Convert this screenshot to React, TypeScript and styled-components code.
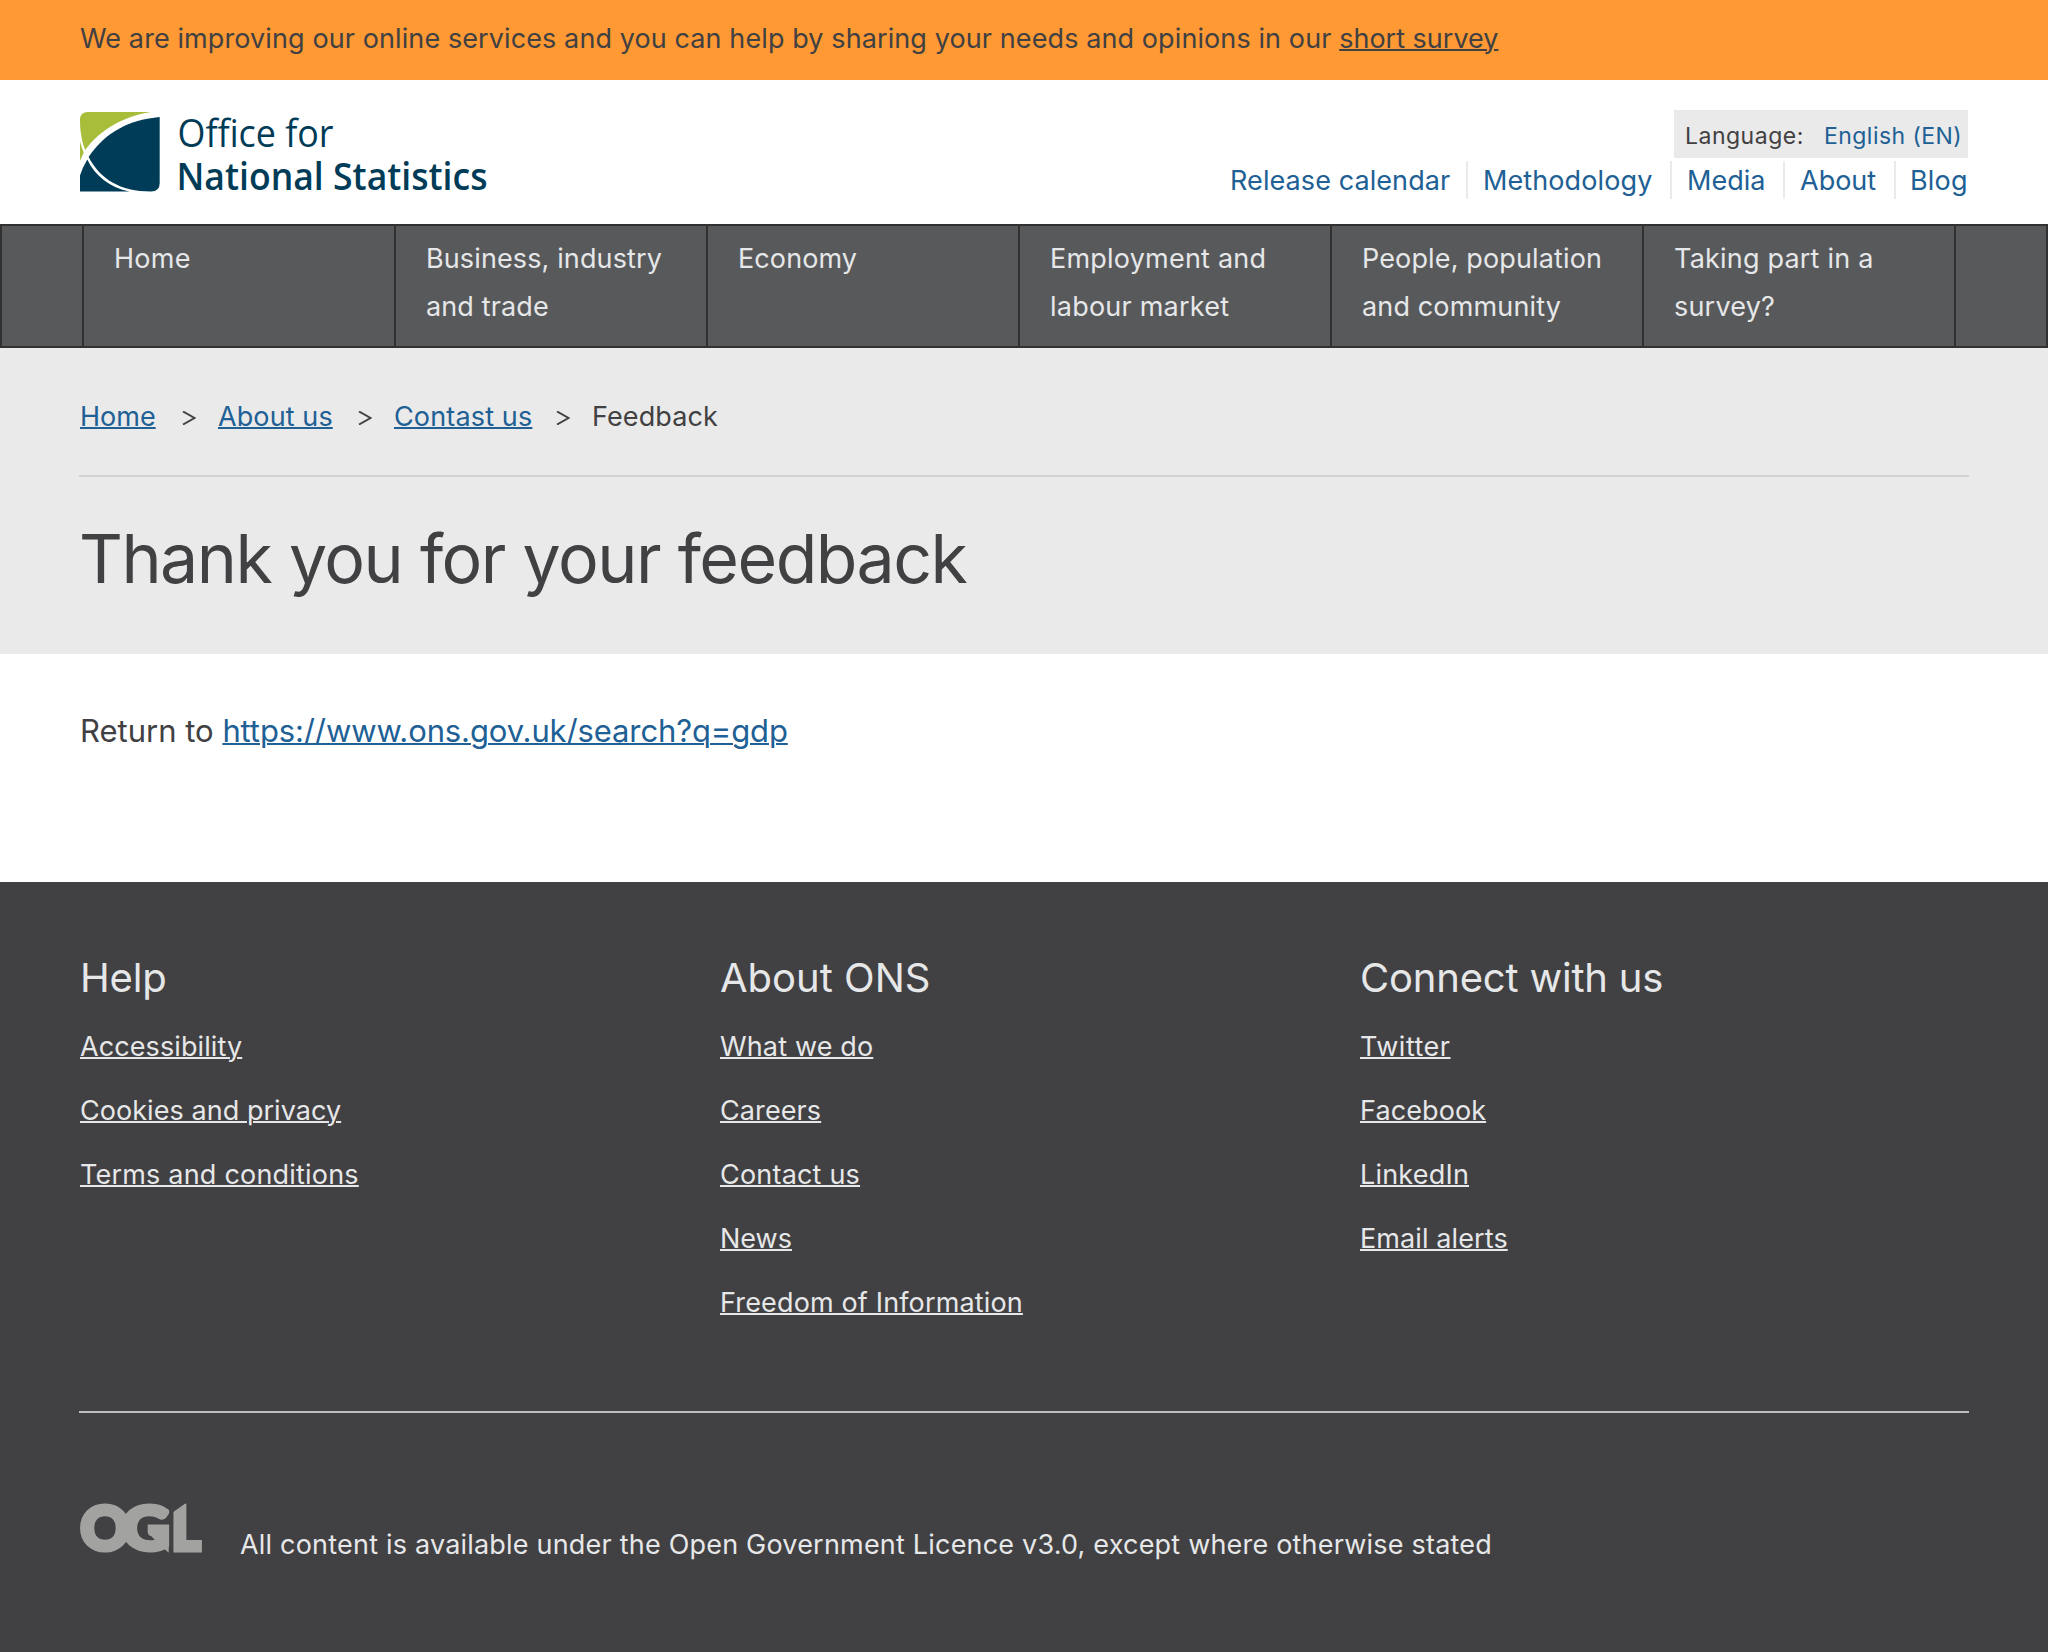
import React from "react";
import styled, { createGlobalStyle } from "styled-components";

const colour = {
  text: "#414042",
  link: "#206095",
  pale: "#e6e7e8",
  panel: "#eaeaea",
  navBorder: "#323132",
  nav: "#58595b",
};

const GlobalStyle = createGlobalStyle`
  * { box-sizing: border-box; }
  body {
    margin: 0;
    background: #fff;
    color: ${colour.text};
    font: 400 27px/48px Inter, "Liberation Sans", sans-serif;
    letter-spacing: 0.2px;
  }
  ul, ol { margin: 0; padding: 0; list-style: none; }
`;

const Page = styled.div`
  display: flex;
  flex-direction: column;
  min-height: 1652px;
`;

const Link = styled.a<{ $tone?: string; $track?: number; $plain?: boolean }>`
  color: ${(p) => p.$tone ?? colour.link};
  letter-spacing: ${(p) => p.$track ?? 0.2}px;
  text-decoration: ${(p) => (p.$plain ? "none" : "underline")};
  text-decoration-thickness: 2px;
  text-underline-offset: 1px;
  white-space: nowrap;
`;

const Banner = styled.div`
  height: 80px;
  padding: 15px 80px 0;
  background: #ff9933;
  letter-spacing: 0.1px;
`;

const Header = styled.header`
  display: flex;
  justify-content: space-between;
  height: 144px;
  padding: 30px 80px 0;
`;

const LogoLink = styled.a`
  display: block;
  height: 84px;
`;

const LogoDrawing = styled.svg`
  display: block;
  overflow: visible;
`;

const HeaderTools = styled.div`
  display: flex;
  flex-direction: column;
  align-items: flex-end;
`;

const Language = styled.div`
  display: flex;
  width: 294px;
  height: 48px;
  padding: 4px 0 0 11px;
  background: ${colour.panel};
  font-size: 23px;
  line-height: 44px;
`;

const LanguageLabel = styled.span`
  width: 139px;
  letter-spacing: 0.5px;
`;

const QuickLinks = styled.ul`
  display: flex;
  margin-top: 3px;
  line-height: 40px;
`;

const QuickItem = styled.li<{ $width: number }>`
  width: ${(p) => p.$width}px;
  height: 38px;
  padding-left: 15px;
  border-right: 2px solid ${colour.panel};
  &:first-child { padding-left: 1px; }
  &:last-child { padding-left: 14px; border-right: 0; }
`;

const Nav = styled.nav`
  height: 124px;
  padding-left: 80px;
  background: ${colour.nav};
  border: 2px solid ${colour.navBorder};
`;

const NavList = styled.ul`
  display: flex;
  height: 100%;
  width: 1874px;
  border-right: 2px solid ${colour.navBorder};
`;

const NavItem = styled.li<{ $track?: number }>`
  width: 312px;
  padding: 9px 24px 0 30px;
  border-left: 2px solid ${colour.navBorder};
  color: ${colour.pale};
  letter-spacing: ${(p) => p.$track ?? 0.2}px;
`;

const Hero = styled.section`
  height: 306px;
  padding: 45px 79px 0;
  background: ${colour.panel};
`;

const Crumbs = styled.ol`
  display: flex;
  height: 84px;
  padding-left: 1px;
  border-bottom: 2px solid #d0d2d3;
`;

const Crumb = styled.li<{ $width?: number; $track?: number }>`
  display: flex;
  width: ${(p) => (p.$width ? `${p.$width}px` : "auto")};
  letter-spacing: ${(p) => p.$track ?? 0.2}px;
  & + & { padding-left: 22px; }
`;

const Chevron = styled.svg`
  flex: none;
  margin: 18px 0 0 auto;
`;

const Title = styled.h1`
  margin: 33px 0 0;
  font-size: 68px;
  font-weight: 400;
  line-height: 96px;
  letter-spacing: -1.5px;
`;

const Main = styled.main`
  height: 228px;
  padding: 53px 80px 0;
  font-size: 31px;
  letter-spacing: 0;
`;

const Footer = styled.footer`
  flex: 1;
  padding: 72px 79px 0;
  background: ${colour.text};
  color: ${colour.pale};
`;

const FooterColumns = styled.div`
  display: grid;
  grid-template-columns: repeat(3, 640px);
  height: 459px;
  width: 1890px;
  padding-left: 1px;
  border-bottom: 2px solid #bcbec0;
`;

const FooterHeading = styled.h2<{ $track: number }>`
  margin: 0 0 21px;
  font-size: 40px;
  font-weight: 400;
  line-height: 48px;
  letter-spacing: ${(p) => p.$track}px;
`;

const FooterList = styled.ul`
  display: grid;
  row-gap: 16px;
`;

const Licence = styled.div`
  display: flex;
  gap: 39px;
  padding: 91px 0 0 1px;
`;

const LicenceText = styled.p`
  margin: 17px 0 0;
`;

function OnsLogo() {
  return (
    <LogoDrawing width="420" height="84" viewBox="0 0 420 84" role="img" aria-label="Office for National Statistics">
      <g transform="translate(0 2)">
        <path fill="#a8bd3a" d="M0 8Q0 0 8 0H71C40 5 18 20 5.300 38C2 30 0 20 0 8Z" />
        <path fill="#a8bd3a" d="M0 29.500Q1.500 35.500 3.800 40.400L0 48.700Z" />
        <path fill="#003c57" d="M79.700 5V71Q79.700 79.500 71 79.500C40 79.500 20 67 8.600 45C26 19 50 8 79.700 5Z" />
        <path fill="#003c57" d="M7.300 47.500C15 64 30 75.500 49.500 79.500H0V63.500Q2.500 55.500 7.300 47.500Z" />
      </g>
      <g fill="#003c57" fontFamily="'Open Sans', 'Noto Sans', sans-serif" fontSize="38.500" letterSpacing="0">
        <text x="97.500" y="37" textLength="156" lengthAdjust="spacingAndGlyphs">Office for</text>
        <text x="96.500" y="80.300" fontWeight="600" textLength="311" lengthAdjust="spacingAndGlyphs">National Statistics</text>
      </g>
    </LogoDrawing>
  );
}

function OglLogo() {
  return (
    <LogoDrawing width="121" height="50" viewBox="0 0 121 50" role="img" aria-label="Open Government Licence">
      <g fill="#a2a2a0" stroke="#a2a2a0" strokeWidth="5" fontFamily="Lato, sans-serif" fontWeight="900" fontSize="61" letterSpacing="0">
        <text x="0.500" y="46.300" textLength="49" lengthAdjust="spacingAndGlyphs">O</text>
        <text x="42" y="46.300" textLength="48" lengthAdjust="spacingAndGlyphs">G</text>
        <text x="91.500" y="45.800" textLength="29" lengthAdjust="spacingAndGlyphs">L</text>
      </g>
      <path fill={colour.text} d="M89.200 -1H106L92.500 8.500V50H89.200Z" />
      <path fill="#a2a2a0" d="M67.700 26H88.700V48.700L83 43.700L72 33Z" />
    </LogoDrawing>
  );
}

function CrumbArrow() {
  return (
    <Chevron width="14" height="14" viewBox="0 0 14 14" fill="none" stroke={colour.text} strokeWidth="2">
      <path d="M1 0.500L12.500 7L1 13.500" />
    </Chevron>
  );
}

type Entry = { label: string; track?: number };

const navItems: Entry[] = [
  { label: "Home", track: 0.3 },
  { label: "Business, industry and trade", track: 0.12 },
  { label: "Economy", track: 0.1 },
  { label: "Employment and labour market", track: 0.22 },
  { label: "People, population and community", track: 0.14 },
  { label: "Taking part in a survey?" },
];

const quickLinks: (Entry & { width: number })[] = [
  { label: "Release calendar", track: 0.08, width: 239 },
  { label: "Methodology", track: 0.1, width: 204 },
  { label: "Media", track: 0, width: 113 },
  { label: "About", track: 0, width: 111 },
  { label: "Blog", track: 0.2, width: 72 },
];

const footerColumns: { heading: string; track: number; links: Entry[] }[] = [
  {
    heading: "Help",
    track: -0.2,
    links: [
      { label: "Accessibility", track: 0.1 },
      { label: "Cookies and privacy", track: 0.05 },
      { label: "Terms and conditions", track: 0.2 },
    ],
  },
  {
    heading: "About ONS",
    track: 0,
    links: [
      { label: "What we do", track: 0.15 },
      { label: "Careers", track: 0.1 },
      { label: "Contact us" },
      { label: "News", track: 0 },
      { label: "Freedom of Information", track: 0.15 },
    ],
  },
  {
    heading: "Connect with us",
    track: -0.2,
    links: [
      { label: "Twitter", track: 0.5 },
      { label: "Facebook", track: 0.1 },
      { label: "LinkedIn" },
      { label: "Email alerts", track: 0.1 },
    ],
  },
];

export default function App() {
  return (
    <Page>
      <GlobalStyle />
      <Banner>
        We are improving our online services and you can help by sharing your needs and opinions in our{" "}
        <Link href="#" $tone={colour.text} $track={0}>short survey</Link>
      </Banner>
      <Header>
        <LogoLink href="#">
          <OnsLogo />
        </LogoLink>
        <HeaderTools>
          <Language>
            <LanguageLabel>Language:</LanguageLabel>
            <Link href="#" $plain $track={0.45}>English (EN)</Link>
          </Language>
          <QuickLinks>
            {quickLinks.map((item) => (
              <QuickItem key={item.label} $width={item.width}>
                <Link href="#" $plain $track={item.track}>{item.label}</Link>
              </QuickItem>
            ))}
          </QuickLinks>
        </HeaderTools>
      </Header>
      <Nav>
        <NavList>
          {navItems.map((item) => (
            <NavItem key={item.label} $track={item.track}>{item.label}</NavItem>
          ))}
        </NavList>
      </Nav>
      <Hero>
        <Crumbs>
          <Crumb $width={116}><Link href="#" $track={0}>Home</Link><CrumbArrow /></Crumb>
          <Crumb $width={176}><Link href="#" $track={0.1}>About us</Link><CrumbArrow /></Crumb>
          <Crumb $width={198}><Link href="#" $track={0.15}>Contast us</Link><CrumbArrow /></Crumb>
          <Crumb $track={0.1}>Feedback</Crumb>
        </Crumbs>
        <Title>Thank you for your feedback</Title>
      </Hero>
      <Main>
        Return to <Link href="#" $track={-0.12}>https://www.ons.gov.uk/search?q=gdp</Link>
      </Main>
      <Footer>
        <FooterColumns>
          {footerColumns.map((column) => (
            <div key={column.heading}>
              <FooterHeading $track={column.track}>{column.heading}</FooterHeading>
              <FooterList>
                {column.links.map((item) => (
                  <li key={item.label}>
                    <Link href="#" $tone={colour.pale} $track={item.track}>{item.label}</Link>
                  </li>
                ))}
              </FooterList>
            </div>
          ))}
        </FooterColumns>
        <Licence>
          <OglLogo />
          <LicenceText>
            All content is available under the Open Government Licence v3.0, except where otherwise stated
          </LicenceText>
        </Licence>
      </Footer>
    </Page>
  );
}
